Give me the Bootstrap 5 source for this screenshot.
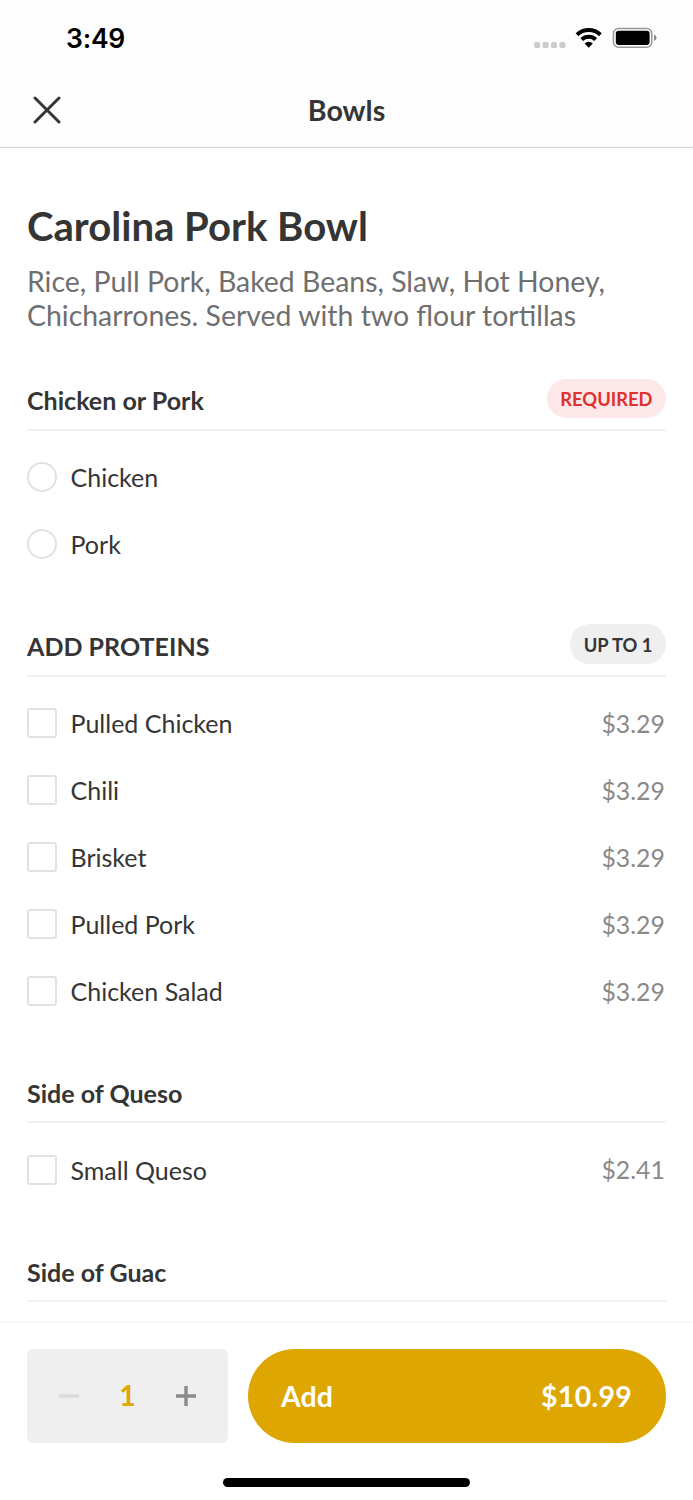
<!DOCTYPE html>
<html lang="en">
<head>
<meta charset="utf-8">
<meta name="viewport" content="width=device-width, initial-scale=1">
<title>Carolina Pork Bowl</title>
<link href="https://cdn.jsdelivr.net/npm/bootstrap@5.3.0/dist/css/bootstrap.min.css" rel="stylesheet">
<style>
  body { font-family: Lato, "Liberation Sans", sans-serif; color: #353535; background: #fff; }
  .screen { height: 1500px; overflow: hidden; }
  .topbar { background: #fdfdfd; border-bottom: 1px solid #d3d3d3; height: 148px; }
  .status { height: 75px; padding: 0 36px 0 66px; }
  .clock { font: 600 26.5px/1 Inter, sans-serif; color: #000; letter-spacing: -.2px; padding-top: 2px; }
  .titlebar { height: 72px; }
  .titlebar h1 { font-size: 28.6px; font-weight: 700; line-height: 70px; }
  .close-btn { left: 33px; top: 21px; line-height: 0; }
  .content { padding: 52px 27px 0; }
  .item-name { font-size: 40.1px; font-weight: 700; line-height: 52px; }
  .desc { font-size: 28.43px; line-height: 34px; color: #6f6f6f; margin-top: 12px; }
  .group-head { height: 53px; border-bottom: 2px solid #f1f1f1; }
  .group-head h3 { font-size: 25.05px; font-weight: 700; line-height: 30px; margin-top: 8px; }
  .group-head.tagged h3 { margin-top: 7px; }
  .group { margin-bottom: 46.5px; }
  .group.first { margin-top: 46px; }
  .group ul { padding-top: 12px; }
  .group.checks { margin-bottom: 45.5px; }
  .group.checks ul { padding-top: 13px; }
  .choice { height: 67px; font-size: 25px; }
  .choice label { line-height: 30px; }
  .choice .form-check-input { width: 30px; height: 30px; border: 2px solid #e2e2e2; margin-right: 13.5px; }
  .choice .form-check-input[type=checkbox] { border-radius: 3px; }
  .price { color: #8a8a8a; margin: 1px 1.2px 0 0; line-height: 30px; font-size: 24.8px; }
  .tag { height: 39.5px; margin-top: .5px; padding: 1.5px 13.5px 0; font-size: 18.35px; font-weight: 700; line-height: 39px; background: #efefef; white-space: nowrap; }
  .tag-required { background: #fde8e9; color: #e0302f; }
  .bottombar { height: 178px; border-top: 1px solid #f5f5f5; background: #fff; padding: 26px 27px 0; gap: 20px; }
  .stepper { width: 201px; height: 94px; background: #efefef; border-radius: 6px; padding: 0 32px; }
  .qty { color: #dfa700; font-size: 28.4px; font-weight: 700; line-height: 34px; margin-top: -2px; }
  .add-btn { height: 94px; background: #dea600; color: #fff; font-size: 28.5px; font-weight: 700; padding: 0 34px 0 33px; }
  .add-btn .total { letter-spacing: .25px; }
  .home-bar { width: 247px; height: 9px; left: 223px; bottom: 13.5px; background: #000; }
</style>
</head>
<body>
<div class="screen d-flex flex-column position-relative">
  <header class="topbar flex-shrink-0">
    <div class="status d-flex align-items-center justify-content-between">
      <span class="clock">3:49</span>
      <svg width="124" height="30" viewBox="533 23 124 30" fill="none">
        <g fill="#cbcbcb"><rect x="534.2" y="42" width="6" height="6" rx="1.8"/><rect x="542.6" y="42" width="6" height="6" rx="1.8"/><rect x="551" y="42" width="6" height="6" rx="1.8"/><rect x="559.4" y="42" width="6" height="6" rx="1.8"/></g>
        <g stroke="#000" stroke-width="4">
          <path d="M577 34.7A17 17 0 0 1 600.4 34.7"/>
          <path d="M581.7 39.5A10.1 10.1 0 0 1 595.7 39.5"/>
        </g>
        <path d="M584.6 43.4A6 6 0 0 1 592.8 43.4L588.7 47.8Z" fill="#000"/>
        <rect x="613.4" y="28.4" width="38.4" height="18.8" rx="5.2" stroke="#999" stroke-width="1.5"/>
        <rect x="615.8" y="30.7" width="33.8" height="14.2" rx="2.8" fill="#000"/>
        <path d="M654 34.6Q656.6 35.5 656.6 37.8T654 41Z" fill="#8f8f8f"/>
      </svg>
    </div>
    <div class="titlebar position-relative text-center">
      <button type="button" class="close-btn btn p-0 border-0 position-absolute" aria-label="Close">
        <svg width="28" height="28" viewBox="0 0 28 28" stroke="#353535" stroke-width="3" stroke-linecap="round"><path d="M2 2L26 26M26 2L2 26"/></svg>
      </button>
      <h1 class="mb-0">Bowls</h1>
    </div>
  </header>

  <main class="content flex-grow-1 overflow-hidden">
    <h2 class="item-name mb-0">Carolina Pork Bowl</h2>
    <p class="desc mb-0">Rice, Pull Pork, Baked Beans, Slaw, Hot Honey, Chicharrones. Served with two flour tortillas</p>

    <section class="group first">
      <div class="group-head tagged d-flex justify-content-between align-items-start"><h3 class="mb-0">Chicken or Pork</h3><span class="tag tag-required rounded-pill">REQUIRED</span></div>
      <ul class="list-unstyled mb-0">
        <li class="choice d-flex align-items-center"><input class="form-check-input mt-0" type="radio" name="meat" id="m1"><label for="m1">Chicken</label></li>
        <li class="choice d-flex align-items-center"><input class="form-check-input mt-0" type="radio" name="meat" id="m2"><label for="m2">Pork</label></li>
      </ul>
    </section>

    <section class="group checks">
      <div class="group-head tagged d-flex justify-content-between align-items-start"><h3 class="mb-0">ADD PROTEINS</h3><span class="tag rounded-pill">UP TO 1</span></div>
      <ul class="list-unstyled mb-0">
        <li class="choice d-flex align-items-center"><input class="form-check-input mt-0" type="checkbox" id="p1"><label for="p1">Pulled Chicken</label><span class="price ms-auto">$3.29</span></li>
        <li class="choice d-flex align-items-center"><input class="form-check-input mt-0" type="checkbox" id="p2"><label for="p2">Chili</label><span class="price ms-auto">$3.29</span></li>
        <li class="choice d-flex align-items-center"><input class="form-check-input mt-0" type="checkbox" id="p3"><label for="p3">Brisket</label><span class="price ms-auto">$3.29</span></li>
        <li class="choice d-flex align-items-center"><input class="form-check-input mt-0" type="checkbox" id="p4"><label for="p4">Pulled Pork</label><span class="price ms-auto">$3.29</span></li>
        <li class="choice d-flex align-items-center"><input class="form-check-input mt-0" type="checkbox" id="p5"><label for="p5">Chicken Salad</label><span class="price ms-auto">$3.29</span></li>
      </ul>
    </section>

    <section class="group checks">
      <div class="group-head"><h3 class="mb-0 pt-2 mt-0">Side of Queso</h3></div>
      <ul class="list-unstyled mb-0">
        <li class="choice d-flex align-items-center"><input class="form-check-input mt-0" type="checkbox" id="q1"><label for="q1">Small Queso</label><span class="price ms-auto">$2.41</span></li>
      </ul>
    </section>

    <section class="group">
      <div class="group-head"><h3 class="mb-0 pt-2 mt-0">Side of Guac</h3></div>
    </section>
  </main>

  <footer class="bottombar d-flex align-items-start flex-shrink-0">
    <div class="stepper d-flex align-items-center justify-content-between flex-shrink-0">
      <svg width="20" height="20" viewBox="0 0 20 20"><path d="M0 10H20" stroke="#dadada" stroke-width="3.4"/></svg>
      <span class="qty">1</span>
      <svg width="20" height="20" viewBox="0 0 20 20"><path d="M0 10H20M10 0V20" stroke="#8a8a8a" stroke-width="3.4"/></svg>
    </div>
    <button type="button" class="add-btn btn border-0 rounded-pill flex-grow-1 d-flex align-items-center justify-content-between"><span>Add</span><span class="total">$10.99</span></button>
    <div class="home-bar position-absolute rounded-pill"></div>
  </footer>
</div>
<script src="https://cdn.jsdelivr.net/npm/bootstrap@5.3.0/dist/js/bootstrap.bundle.min.js"></script>
</body>
</html>
